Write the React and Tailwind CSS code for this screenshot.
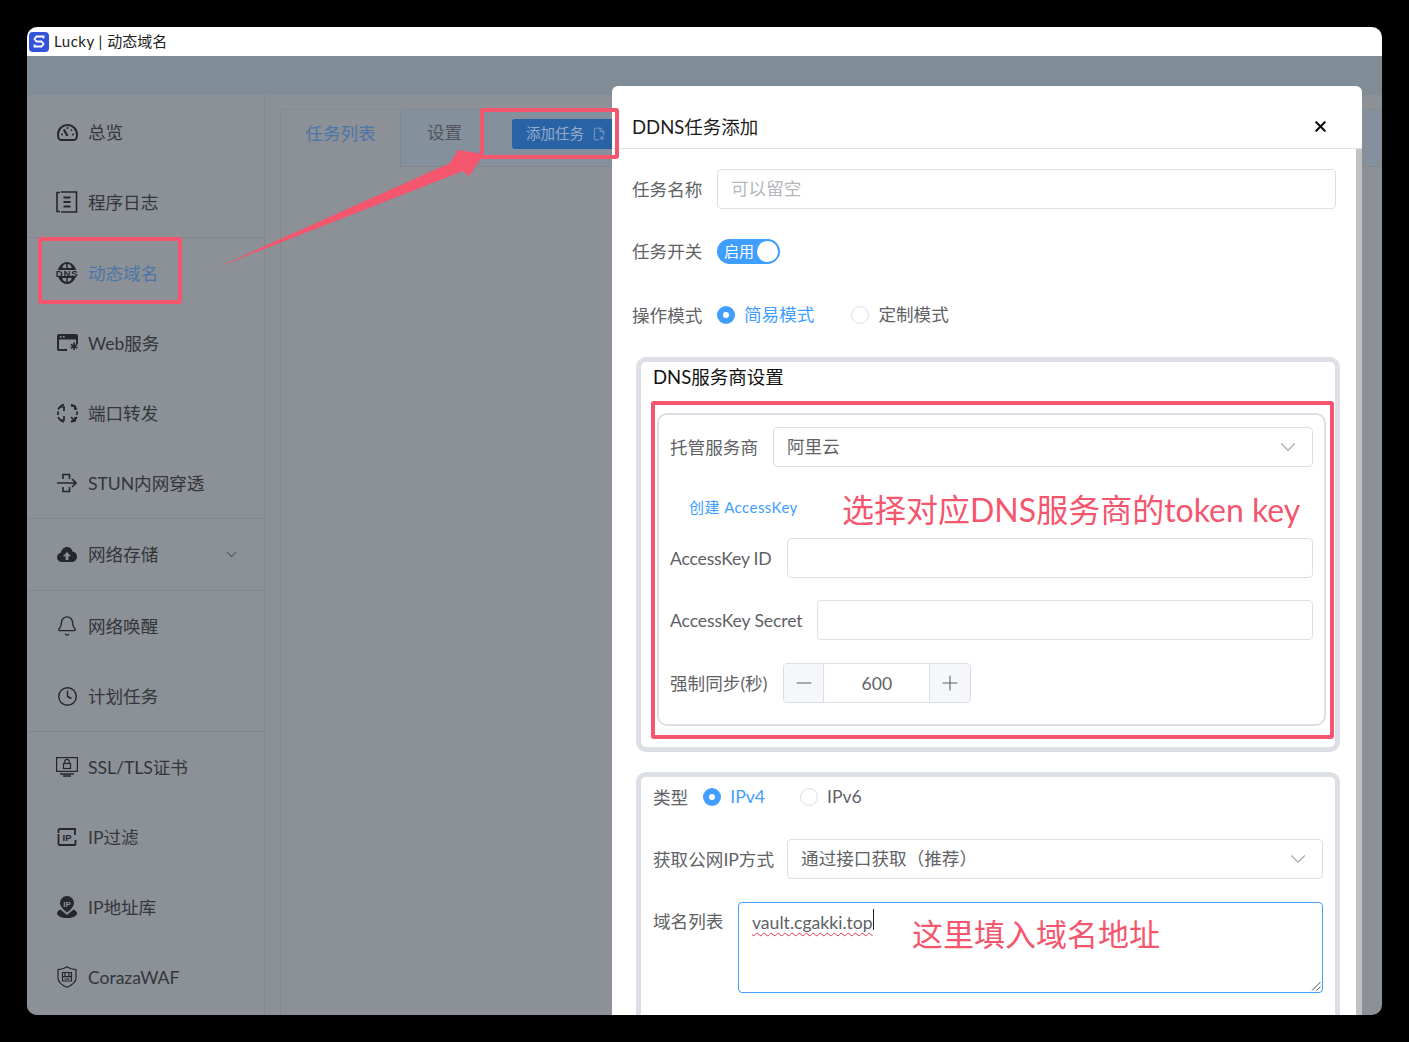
import { Bell, Clock, ChevronDown, X, Minus, Plus, FilePlus2 } from 'lucide-react'

// ── Sidebar icons ────────────────────────────────────────────────────────────

function GaugeIcon() {
  return (
    <svg width="21" height="17" viewBox="0 0 21 17" fill="none" stroke="currentColor" strokeWidth="2">
      <path d="M4 16h13c1.500 0 3-2 3-5.500C20 5 15.700 1 10.500 1S1 5 1 10.500C1 14 2.500 16 4 16z" />
      <path d="M6.800 5.500 10.500 12" strokeWidth="2.200" />
      <path d="M10.500 3v2M4 10.500h2M15 10.500h2M15 5.500l-1.200 1.200" strokeWidth="1.600" />
    </svg>
  )
}

function LogIcon() {
  return (
    <svg width="22" height="22" viewBox="0 0 22 22" fill="none" stroke="currentColor" strokeWidth="1.6">
      <path d="M4 1.500H1v19h3M5 1h15.500v20H5" />
      <path d="M7.500 6.500h7M7.500 11h7M7.500 15.500h7" strokeWidth="1.800" />
    </svg>
  )
}

function DnsIcon() {
  return (
    <svg width="22" height="22" viewBox="0 0 22 22">
      <path d="M3.300 7C5 3.400 7.800 1 11 1s6 2.400 7.700 6zM3.300 15c1.700 3.600 4.500 6 7.700 6s6-2.400 7.700-6z" fill="none" stroke="currentColor" strokeWidth="2" />
      <path d="M11 1v6M11 15v6M6.500 3c-.6 1.200-1 2.600-1 4M15.500 3c.6 1.200 1 2.600 1 4M6.500 19c-.6-1.200-1-2.600-1-4M15.500 19c.6-1.200 1-2.600 1-4" stroke="currentColor" strokeWidth="1.500" fill="none" />
      <text x="11" y="14.600" textAnchor="middle" fontSize="9.500" fontWeight="700" letterSpacing="0.900" fill="currentColor" fontFamily="Liberation Sans, sans-serif">DNS</text>
    </svg>
  )
}

function WebIcon() {
  return (
    <svg width="21" height="18" viewBox="0 0 21 18" fill="currentColor">
      <path d="M2 0h17a2 2 0 0 1 2 2v8h-2V5.500H2V15h8v2H2a2 2 0 0 1-2-2V2a2 2 0 0 1 2-2z" />
      <path d="M16.200 8.600h1.600v2.300l2-1.100.8 1.400-2 1.100 2 1.200-.8 1.300-2-1.100V16h-1.600v-2.300l-2 1.100-.8-1.300 2-1.200-2-1.100.8-1.400 2 1.100z" />
      <rect x="3" y="2" width="1.600" height="1.600" fill="#8c9097" />
      <rect x="6" y="2" width="1.600" height="1.600" fill="#8c9097" />
    </svg>
  )
}

function PortIcon() {
  return (
    <svg width="21" height="21" viewBox="0 0 21 21" fill="none" stroke="currentColor" strokeWidth="1.700">
      <path d="M7 1.500C4.500 2.200 2.300 3.800 1.200 6.500M14 1.500c2.500.7 4.500 2.300 5.600 5M1.200 14c1.100 2.700 3.300 4.300 5.800 5M19.800 14c-1.100 2.700-3.300 4.300-5.800 5" />
      <path d="M1 8.500V12M20 8.500V12" />
      <path d="M3 4h4v4M18 7V3h-4M3 17h4v-4M14 14l4.500 4.500M18 14v4h-4" />
    </svg>
  )
}

function StunIcon() {
  return (
    <svg width="20" height="20" viewBox="0 0 20 20" fill="none" stroke="currentColor" strokeWidth="1.600">
      <path d="M0 10h19M15 6l4 4-4 4" />
      <path d="M6 6V1.500h6.500V6M6 14v4.500h6.500V14" />
    </svg>
  )
}

function CloudIcon() {
  return (
    <svg width="20" height="15" viewBox="0 0 20 15" fill="currentColor">
      <path fillRule="evenodd" d="M10 0c2.800 0 5 1.900 5.500 4.500C18 4.800 20 6.800 20 9.500 20 12.500 17.700 15 15 15H4.500C2 15 0 13 0 10.300 0 8 1.500 6.200 3.700 5.700 4.500 2.400 7 0 10 0zM10 5l-4 4.200h2.600V13h2.800V9.200H14z" />
    </svg>
  )
}

function SslIcon() {
  return (
    <svg width="22" height="20" viewBox="0 0 22 20" fill="none" stroke="currentColor" strokeWidth="1.200">
      <rect x="0.600" y="0.600" width="20.800" height="13.800" />
      <rect x="7.500" y="6.500" width="7" height="5" />
      <path d="M8.800 6.500V4.500a2.200 2.200 0 0 1 4.400 0v2" />
      <path d="M4 17h14M7 19h8" strokeWidth="1.600" />
    </svg>
  )
}

function IpBoxIcon() {
  return (
    <svg width="20" height="18" viewBox="0 0 20 18" fill="none" stroke="currentColor" strokeWidth="1.800">
      <path d="M1.500 5V2a1 1 0 0 1 1-1H18v6M18.500 12v4a1 1 0 0 1-1 1H2.500a1 1 0 0 1-1-1V6" />
      <text x="10" y="12.500" textAnchor="middle" fontSize="9.500" fontWeight="700" fill="currentColor" stroke="none" fontFamily="Liberation Sans, sans-serif">IP</text>
    </svg>
  )
}

function PinIcon() {
  return (
    <svg width="20" height="22" viewBox="0 0 20 22" fill="currentColor">
      <path d="M10 0a7 7 0 0 1 7 7c0 3-3 6.500-7 9.500C6 13.500 3 10 3 7a7 7 0 0 1 7-7z" />
      <path d="M3.500 13.500C1.300 14.500 0 15.800 0 17.500 0 20 4.500 22 10 22s10-2 10-4.500c0-1.700-1.300-3-3.500-4L10 19z" />
      <text x="10" y="10.500" textAnchor="middle" fontSize="8" fontWeight="700" fill="#8c9097" fontFamily="Liberation Sans, sans-serif">IP</text>
    </svg>
  )
}

function ShieldIcon() {
  return (
    <svg width="20" height="22" viewBox="0 0 20 22" fill="none" stroke="currentColor" strokeWidth="1.200">
      <path d="M10 .8c2.500 1.800 5.500 2.700 9 2.900v8c0 4-4 7.500-9 9.500-5-2-9-5.500-9-9.500v-8c3.500-.2 6.500-1.100 9-2.900z" />
      <path d="M5.500 6.500h9v8.500h-9zM5.500 10.700h9M8 6.500v4.200M12 6.500v4.200M7.500 13l5 0" />
    </svg>
  )
}

// ── Sidebar ──────────────────────────────────────────────────────────────────

const MENU = [
  [
    { icon: <GaugeIcon />, label: '总览' },
    { icon: <LogIcon />, label: '程序日志' },
  ],
  [
    { icon: <DnsIcon />, label: '动态域名', active: true },
    { icon: <WebIcon />, label: 'Web服务' },
    { icon: <PortIcon />, label: '端口转发' },
    { icon: <StunIcon />, label: 'STUN内网穿透' },
  ],
  [{ icon: <CloudIcon />, label: '网络存储', arrow: true, tall: true }],
  [
    { icon: <Bell size={22} strokeWidth={1.5} />, label: '网络唤醒' },
    { icon: <Clock size={21} strokeWidth={1.6} />, label: '计划任务' },
  ],
  [
    { icon: <SslIcon />, label: 'SSL/TLS证书' },
    { icon: <IpBoxIcon />, label: 'IP过滤' },
    { icon: <PinIcon />, label: 'IP地址库' },
    { icon: <ShieldIcon />, label: 'CorazaWAF' },
  ],
]

function MenuItem({ icon, label, active, arrow, tall }) {
  return (
    <div className={`flex items-center pl-[29px] pr-[24px] ${tall ? 'h-[71px]' : 'h-[70px]'}`}>
      <span className="flex w-[22px] shrink-0 justify-center text-[#24272c]">{icon}</span>
      <span className={`ml-[10px] flex-1 translate-y-px text-[17.600px] tracking-[-0.050px] ${active ? 'text-[#4d76a6]' : 'text-[#33363b]'}`}>{label}</span>
      {arrow && <ChevronDown size={17} strokeWidth={1.500} className="text-[#55585e]" />}
    </div>
  )
}

function Sidebar() {
  return (
    <div className="w-[238px] shrink-0 border-r border-[#83878d] bg-[#8c9097] pt-[2px]">
      {MENU.map((group, i) => (
        <div key={i} className={i < MENU.length - 1 ? 'border-b border-[#83878d]' : ''}>
          {group.map((item) => <MenuItem key={item.label} {...item} />)}
        </div>
      ))}
    </div>
  )
}

// ── Form bits ────────────────────────────────────────────────────────────────

function Field({ label, children, className = '', labelClass = '' }) {
  return (
    <div className={`flex items-center ${className}`}>
      <span className={`shrink-0 translate-y-px text-[17.600px] text-[#606266] ${labelClass}`}>{label}</span>
      {children}
    </div>
  )
}

function Input({ className = '', children, muted }) {
  return (
    <div className={`flex h-[40px] flex-1 items-center justify-between rounded-[4px] border border-[#dcdfe6] bg-white pl-[13px] pr-[14px] text-[17.600px] ${muted ? 'text-[#b4b7bd]' : 'text-[#606266]'} ${className}`}>
      {children}
    </div>
  )
}

function Radio({ label, checked, className = '' }) {
  return (
    <div className={`flex items-center ${className}`}>
      {checked ? (
        <span className="flex h-[18px] w-[18px] items-center justify-center rounded-full bg-[#409eff]">
          <span className="h-[6px] w-[6px] rounded-full bg-white" />
        </span>
      ) : (
        <span className="h-[18px] w-[18px] rounded-full border border-[#dcdfe6] bg-white" />
      )}
      <span className={`ml-[9px] text-[17.600px] ${checked ? 'text-[#409eff]' : 'text-[#606266]'}`}>{label}</span>
    </div>
  )
}

// ── Dialog ───────────────────────────────────────────────────────────────────

function Dialog() {
  return (
    <div className="absolute bottom-0 left-[585px] top-[59px] flex w-[750px] flex-col overflow-hidden rounded-t-[6px] bg-white">
      <div className="flex h-[63px] shrink-0 items-end justify-between border-b border-[#dcdfe6] pb-[9px] pl-[20px] pr-[33px]">
        <span className="text-[18.500px] leading-[24px] text-[#1b1b1b]">DDNS任务添加</span>
        <X size={17} strokeWidth={3} className="mb-[4px] text-[#111]" />
      </div>
      <div className="flex min-h-0 flex-1">
        <div className="w-[744px] overflow-hidden pl-[20px] pt-[20px]">
          <Field label="任务名称" className="h-[40px] w-[704px]">
            <Input muted className="ml-[14.600px]">可以留空</Input>
          </Field>
          <Field label="任务开关" className="mt-[22px] h-[40px]">
            <div className="ml-[14.600px] flex h-[25px] w-[63px] items-center justify-between rounded-full bg-[#409eff] pl-[7px] pr-[2px]">
              <span className="text-[15px] text-white">启用</span>
              <span className="h-[21px] w-[21px] rounded-full bg-white" />
            </div>
          </Field>
          <Field label="操作模式" className="mt-[24px] h-[40px]">
            <Radio checked label="简易模式" className="ml-[14.600px]" />
            <Radio label="定制模式" className="ml-[37px]" />
          </Field>

          <div className="ml-[4px] mt-[22px] w-[704px] rounded-[10px] border-[5px] border-[#dcdfe6] pb-[21px]">
            <div className="flex h-[32px] items-center pl-[12px] text-[18.500px] text-[#111]">DNS服务商设置</div>
            <div className="ml-[16px] mt-[19px] w-[669px] rounded-[10px] border-2 border-[#dcdfe6] pb-[21px] pl-[11px] pr-[11px] pt-[12px]">
              <Field label="托管服务商" className="h-[40px]" labelClass="-translate-y-px">
                <Input className="ml-[15px]">
                  阿里云
                  <ChevronDown size={26} strokeWidth={1.100} className="-mr-[3px] text-[#a8abb2]" />
                </Input>
              </Field>
              <div className="ml-[19px] mt-[30px] flex h-[20px] items-center text-[15px] tracking-[0.450px] text-[#409eff]">创建 AccessKey</div>
              <Field label="AccessKey ID" className="mt-[21px] h-[40px]" labelClass="tracking-[-0.200px]">
                <Input className="ml-[15px]" />
              </Field>
              <Field label="AccessKey Secret" className="mt-[22px] h-[40px]" labelClass="tracking-[-0.120px]">
                <Input className="ml-[15px]" />
              </Field>
              <Field label="强制同步(秒)" className="mt-[23px] h-[40px]">
                <div className="ml-[16px] flex h-[40px] w-[188px] rounded-[4px] border border-[#dcdfe6] text-[17.600px] text-[#606266]">
                  <span className="flex w-[40px] items-center justify-center rounded-l-[4px] border-r border-[#dcdfe6] bg-[#f5f7fa]">
                    <Minus size={24} strokeWidth={1.100} />
                  </span>
                  <span className="flex flex-1 translate-y-px items-center justify-center">600</span>
                  <span className="flex w-[41px] items-center justify-center rounded-r-[4px] border-l border-[#dcdfe6] bg-[#f5f7fa]">
                    <Plus size={24} strokeWidth={1.100} />
                  </span>
                </div>
              </Field>
            </div>
          </div>

          <div className="ml-[4px] mt-[20px] h-[400px] w-[704px] rounded-[10px] border-[5px] border-[#dcdfe6] pl-[12px] pr-[12px]">
            <Field label="类型" className="h-[40px]">
              <Radio checked label="IPv4" className="ml-[15px]" />
              <Radio label="IPv6" className="ml-[35px]" />
            </Field>
            <Field label="获取公网IP方式" className="mt-[22px] h-[40px]">
              <Input className="ml-[13px]">
                通过接口获取（推荐）
                <ChevronDown size={26} strokeWidth={1.100} className="-mr-[3px] text-[#a8abb2]" />
              </Input>
            </Field>
            <div className="mt-[23px] flex">
              <span className="mt-[7px] shrink-0 text-[17.600px] text-[#606266]">域名列表</span>
              <div className="relative ml-[14.600px] h-[91px] flex-1 rounded-[4px] border border-[#409eff] pl-[13px] pt-[5px] text-[17.600px] text-[#606266]">
                <span className="underline decoration-[#e8364f] decoration-wavy decoration-1 underline-offset-[3px]">vault.cgakki.top</span>
                <span className="inline-block h-[21px] w-px translate-y-[1px] bg-[#222]" />
                <svg className="absolute bottom-[1px] right-[1px]" width="10" height="10" viewBox="0 0 10 10" stroke="#555" strokeWidth="1">
                  <path d="M1 9.500 9.500 1M5.500 9.500 9.500 5.500" />
                </svg>
              </div>
            </div>
          </div>
        </div>
        <div className="w-[6px] bg-[#c1c1c1]" />
      </div>
    </div>
  )
}

// ── Annotations drawn over the screenshot ────────────────────────────────────

function Annotations() {
  return (
    <>
      <svg className="absolute left-0 top-0" width="1409" height="1042" fill="#f4566e">
        <polygon points="218,267 450,163 458,150 484,154 469,176 463,171" />
      </svg>
      <div className="absolute left-[38px] top-[237px] h-[67px] w-[144px] rounded-[3px] border-4 border-[#f4566e]" />
      <div className="absolute left-[480px] top-[108px] h-[51px] w-[139px] rounded-[3px] border-4 border-[#f4566e]" />
      <div className="absolute left-[651px] top-[401px] h-[338px] w-[683px] rounded-[3px] border-4 border-[#f4566e]" />
      <div className="absolute left-[842px] top-[487px] text-[32px] leading-[46px] text-[#f4566e]">选择对应DNS服务商的token key</div>
      <div className="absolute left-[912px] top-[911px] text-[31px] leading-[46px] text-[#f4566e]">这里填入域名地址</div>
    </>
  )
}

// ── Page ─────────────────────────────────────────────────────────────────────

export default function App() {
  return (
    <div className="relative h-[1042px] w-[1409px] overflow-hidden bg-black pl-[27px] pt-[27px] font-['Lato','Noto_Sans_CJK_SC',sans-serif]">
      <div className="relative flex h-[988px] w-[1355px] flex-col overflow-hidden rounded-[10px]">
        <div className="flex h-[29px] shrink-0 items-center bg-white pl-[2px] text-[15px] text-[#222]">
          <span className="flex h-[20px] w-[20px] items-center justify-center rounded-[4px] bg-[#3651dc]">
            <svg width="12" height="14" viewBox="0 0 12 14" fill="none" stroke="white" strokeWidth="1.800">
              <path d="M10.500 3.500V1.500h-7L1.500 4l2 2.500h5l2 2.500-2 2.500h-7v-2" />
            </svg>
          </span>
          <span className="ml-[5px]"><span className="tracking-[0.500px]">Lucky | </span>动态域名</span>
        </div>
        <div className="h-[39px] shrink-0 bg-[#808c96]" />
        <div className="flex min-h-0 flex-1 bg-[#8c9097]">
          <Sidebar />
          <div className="min-w-0 flex-1 pl-[15px] pt-[14px]">
            <div className="flex h-[58px] border border-b-[#83878d] border-l-[#83878d] border-r-0 border-t-[#878b91] bg-[#84909b]">
              <div className="flex h-[57px] w-[119px] items-center justify-center bg-[#8c9097] pb-[9px] text-[17.600px] text-[#4d76a6]">任务列表</div>
              <div className="flex w-[88px] items-center justify-center border-l border-[#83878d] pb-[9px] text-[17.600px] text-[#53565c]">设置</div>
              <div className="ml-[24px] mt-[9px] flex h-[30px] w-[120px] items-center rounded-[3px] bg-[#2a62a6] pl-[14px] text-[14.500px] text-[#93abc9]">
                添加任务
                <FilePlus2 size={14} strokeWidth={1.400} className="ml-[8px]" />
              </div>
            </div>
            <div className="h-full border-l border-[#83878d]" />
          </div>
        </div>
        <Dialog />
      </div>
      <Annotations />
    </div>
  )
}
